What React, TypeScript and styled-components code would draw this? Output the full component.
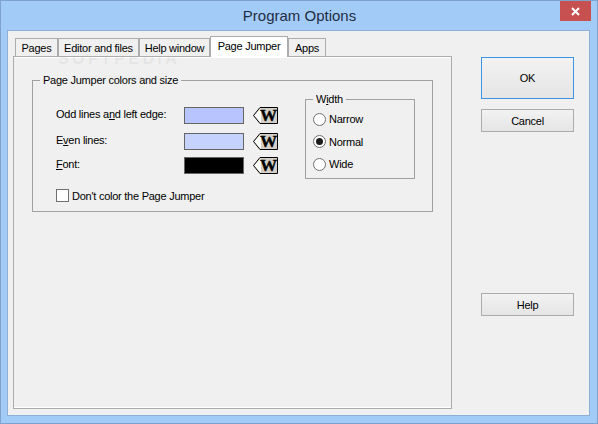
import React from 'react';
import styled, { createGlobalStyle } from 'styled-components';

const GlobalStyle = createGlobalStyle`
  html, body { margin: 0; padding: 0; background: #a3cbf7; }
  body { font-family: 'Liberation Sans', Arial, sans-serif; font-size: 11px; letter-spacing: -0.25px; color: #000; }
`;

// window frame
const Frame = styled.div`
  width: 598px;
  height: 424px;
  box-sizing: border-box;
  background: #a3cbf7;
  border: 1px solid #7fa3cc;
  display: flex;
  flex-direction: column;
  padding: 0 7px 7px 6px;
`;

const TitleBar = styled.div`
  height: 29px;
  flex: none;
  display: flex;
  align-items: center;
  justify-content: center;
  position: relative;
  font-size: 15px;
  letter-spacing: 0;
  color: #1f2d44;
  padding-left: 2px;
`;

const CloseButton = styled.div`
  position: absolute;
  top: 0;
  right: -1px;
  width: 31px;
  height: 20px;
  background: #c75050;
  display: flex;
  align-items: center;
  justify-content: center;
`;

const Client = styled.div`
  flex: 1;
  box-sizing: border-box;
  background: #f0f0f0;
  border: 1px solid #8fb0d6;
  display: flex;
  padding: 6px 16px 6px 5px;
`;

const LeftColumn = styled.div`
  width: 439px;
  flex: none;
  display: flex;
  flex-direction: column;
`;

const TabRow = styled.div`
  height: 20px;
  flex: none;
  display: flex;
  align-items: flex-end;
  padding-left: 2px;
  position: relative;
  z-index: 1;
  margin-bottom: -1px;
`;

const Tab = styled.div<{ $width: number; $active?: boolean }>`
  width: ${(p) => p.$width}px;
  box-sizing: border-box;
  height: ${(p) => (p.$active ? 21 : 19)}px;
  background: ${(p) => (p.$active ? '#fff' : '#f0f0f0')};
  border: 1px solid #acacac;
  border-bottom: ${(p) => (p.$active ? 'none' : '1px solid #acacac')};
  display: flex;
  align-items: center;
  justify-content: center;
  white-space: nowrap;
  padding-bottom: ${(p) => (p.$active ? 3 : 0)}px;
`;

const Panel = styled.div`
  flex: 1;
  box-sizing: border-box;
  border: 1px solid #acacac;
  box-shadow: inset 0 1px 0 #fff, inset 0 -1px 0 #fff;
  padding: 16px 18px 0;
`;

const GroupBox = styled.fieldset`
  margin: 0;
  padding: 5px 17px 8px 23px;
  width: 401px;
  height: 139px;
  box-sizing: border-box;
  border: 1px solid #a0a0a0;
  display: flex;
  justify-content: space-between;
`;

const GroupLegend = styled.legend`
  margin-left: -16px;
  padding: 0 3px;
  line-height: 14px;
`;

const ColorsColumn = styled.div`
  display: flex;
  flex-direction: column;
  padding-top: 11px;
`;

const ColorRow = styled.div<{ $gap?: number }>`
  height: 25px;
  margin-top: ${(p) => p.$gap ?? 0}px;
  display: flex;
  align-items: center;
`;

const RowLabel = styled.span`
  width: 128px;
  padding-bottom: 3px;
`;

const Swatch = styled.div<{ $color: string }>`
  width: 60px;
  height: 17px;
  box-sizing: border-box;
  border: 1px solid #666;
  background: ${(p) => p.$color};
`;

const PickerIcon = styled.svg`
  margin-left: 9px;
  display: block;
`;

const CheckRow = styled.label`
  display: flex;
  align-items: center;
  gap: 3px;
  margin-top: 11px;
`;

const CheckBox = styled.span`
  width: 13px;
  height: 13px;
  box-sizing: border-box;
  border: 1px solid #707070;
  background: #fff;
`;

const WidthGroup = styled.fieldset`
  margin: 0;
  padding: 2px 0 0 7px;
  width: 110px;
  height: 87px;
  box-sizing: border-box;
  border: 1px solid #a0a0a0;
  align-self: flex-start;
  display: flex;
  flex-direction: column;
`;

const WidthLegend = styled.legend`
  margin-left: 0;
  padding: 0 3px;
  line-height: 14px;
`;

const RadioRow = styled.div`
  height: 22.5px;
  display: flex;
  align-items: center;
  gap: 3px;
`;

const RadioCircle = styled.span<{ $checked?: boolean }>`
  width: 13px;
  height: 13px;
  box-sizing: border-box;
  border: 1px solid #707070;
  border-radius: 50%;
  background: #fff;
  display: flex;
  align-items: center;
  justify-content: center;
  &::after {
    content: '';
    width: 7px;
    height: 7px;
    border-radius: 50%;
    background: ${(p) => (p.$checked ? '#1c1c1c' : 'transparent')};
  }
`;

const ButtonColumn = styled.div`
  flex: 1;
  display: flex;
  flex-direction: column;
  padding: 20px 0 0 29px;
`;

const DialogButton = styled.div<{ $primary?: boolean; $top: number }>`
  width: 93px;
  height: ${(p) => (p.$primary ? 42 : 23)}px;
  margin-top: ${(p) => p.$top}px;
  box-sizing: border-box;
  border: 1px solid ${(p) => (p.$primary ? '#3c94e8' : '#acacac')};
  background: linear-gradient(#f2f2f2, #e5e5e5);
  display: flex;
  align-items: center;
  justify-content: center;
`;

const Watermark = styled.div`
  position: absolute;
  left: 58px;
  top: 50px;
  font-size: 16px;
  line-height: 18px;
  font-weight: 700;
  letter-spacing: 3.4px;
  color: rgba(150, 150, 150, 0.12);
  pointer-events: none;
`;

const WatermarkUrl = styled.div`
  font-size: 9px;
  line-height: 10px;
  font-weight: 400;
  letter-spacing: 0.4px;
  margin: 5px 0 0 22px;
`;

function WButton() {
  return (
    <PickerIcon width="25" height="17" viewBox="0 0 25 17">
      <path d="M0.5 8.5 L7 0.5 H24.5 V16.5 H7 Z" fill="#d4d0c8" stroke="#000" />
      <path d="M1.5 8.5 L7.4 1.5 H8 V15.5 H7.4 Z" fill="#fff" />
      <text
        x="15.5"
        y="13.5"
        textAnchor="middle"
        fontFamily="'Liberation Serif', serif"
        fontWeight="700"
        fontSize="17"
        letterSpacing="0"
        stroke="#000"
        strokeWidth="0.4"
        fill="#000"
      >
        W
      </text>
    </PickerIcon>
  );
}

export default function App() {
  return (
    <>
      <GlobalStyle />
      <Frame>
        <TitleBar>
          Program Options
          <CloseButton>
            <svg width="9" height="9" viewBox="0 0 9 9">
              <path d="M1 1 L8 8 M8 1 L1 8" stroke="#fff" strokeWidth="2" />
            </svg>
          </CloseButton>
        </TitleBar>
        <Client>
          <LeftColumn>
            <TabRow>
              <Tab $width={43}>Pages</Tab>
              <Tab $width={81}>Editor and files</Tab>
              <Tab $width={71}>Help window</Tab>
              <Tab $width={78} $active>
                Page Jumper
              </Tab>
              <Tab $width={38}>Apps</Tab>
            </TabRow>
            <Panel>
              <GroupBox>
                <GroupLegend>Page Jumper colors and size</GroupLegend>
                <ColorsColumn>
                  <ColorRow>
                    <RowLabel>
                      Odd lines a<u>n</u>d left edge:
                    </RowLabel>
                    <Swatch $color="#b8c4fd" />
                    <WButton />
                  </ColorRow>
                  <ColorRow $gap={1}>
                    <RowLabel>
                      E<u>v</u>en lines:
                    </RowLabel>
                    <Swatch $color="#c6d2fe" />
                    <WButton />
                  </ColorRow>
                  <ColorRow $gap={-1}>
                    <RowLabel>
                      <u>F</u>ont:
                    </RowLabel>
                    <Swatch $color="#000000" />
                    <WButton />
                  </ColorRow>
                  <CheckRow>
                    <CheckBox />
                    Don't color the Page Jumper
                  </CheckRow>
                </ColorsColumn>
                <WidthGroup>
                  <WidthLegend>
                    W<u>i</u>dth
                  </WidthLegend>
                  <RadioRow>
                    <RadioCircle />
                    Narrow
                  </RadioRow>
                  <RadioRow>
                    <RadioCircle $checked />
                    Normal
                  </RadioRow>
                  <RadioRow>
                    <RadioCircle />
                    Wide
                  </RadioRow>
                </WidthGroup>
              </GroupBox>
            </Panel>
          </LeftColumn>
          <ButtonColumn>
            <DialogButton $primary $top={0}>
              OK
            </DialogButton>
            <DialogButton $top={10}>Cancel</DialogButton>
            <DialogButton $top={161}>Help</DialogButton>
          </ButtonColumn>
        </Client>
      </Frame>
      <Watermark>
        SOFTPEDIA
        <WatermarkUrl>www.softpedia.com</WatermarkUrl>
      </Watermark>
    </>
  );
}
